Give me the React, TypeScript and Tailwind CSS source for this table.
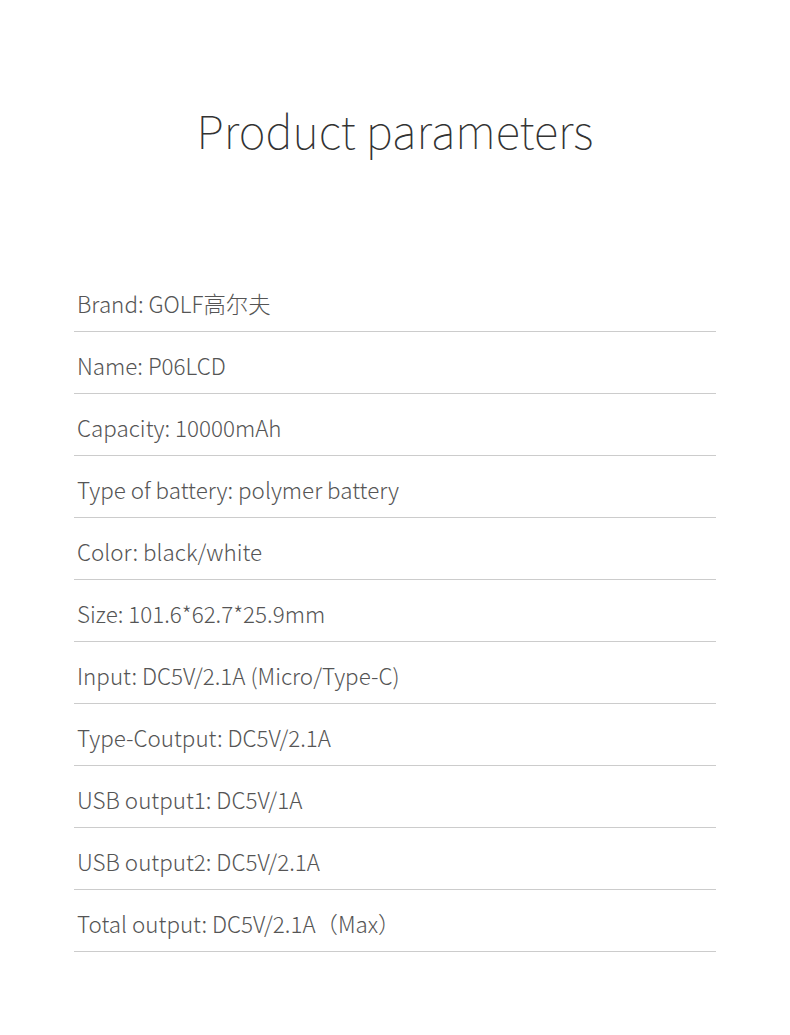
const PARAMS = [
  'Brand: GOLF高尔夫',
  'Name: P06LCD',
  'Capacity: 10000mAh',
  'Type of battery: polymer battery',
  'Color: black/white',
  'Size: 101.6*62.7*25.9mm',
  'Input: DC5V/2.1A (Micro/Type-C)',
  'Type-Coutput: DC5V/2.1A',
  'USB output1: DC5V/1A',
  'USB output2: DC5V/2.1A',
  'Total output: DC5V/2.1A（Max）',
]

export default function App() {
  return (
    <div
      className="h-[1035px] w-[790px] bg-white"
      style={{ fontFamily: '"Noto Sans CJK SC", "Noto Sans", sans-serif' }}
    >
      {/* Title */}
      <h1 className="pt-[97px] text-center text-[45.5px] font-thin leading-[64px] text-[#333]">Product parameters</h1>

      {/* Parameter list */}
      <div className="mx-[74px] mt-[109px]">
        {PARAMS.map((p) => (
          <div key={p} className="flex h-[62px] items-end border-b border-[#cccccc] pb-[12px] pl-[3px]">
            <span className="text-[22.4px] font-light leading-[32px] text-[#555]">{p}</span>
          </div>
        ))}
      </div>
    </div>
  )
}
